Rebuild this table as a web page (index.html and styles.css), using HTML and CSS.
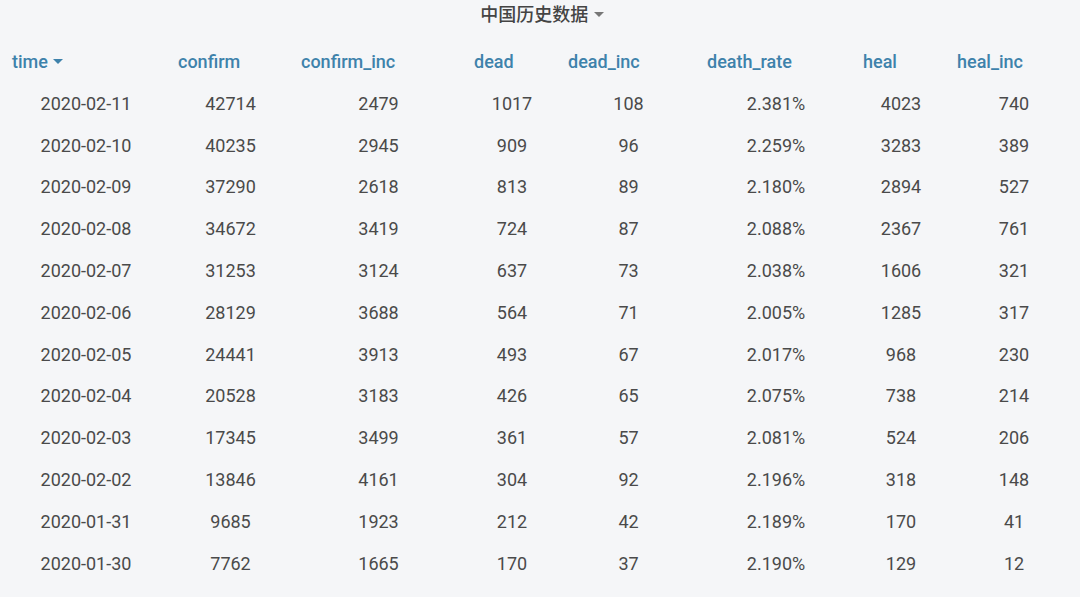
FILE: index.html
```html
<!DOCTYPE html>
<html lang="zh">
<head>
<meta charset="utf-8">
<title>中国历史数据</title>
<link rel="stylesheet" href="styles.css">
</head>
<body>
<div class="page">
  <div class="title">中国历史数据 <span class="caret caret-title"></span></div>
  <div class="table">
    <div class="th">time <span class="caret caret-head"></span></div>
    <div class="th">confirm</div>
    <div class="th">confirm_inc</div>
    <div class="th">dead</div>
    <div class="th">dead_inc</div>
    <div class="th">death_rate</div>
    <div class="th">heal</div>
    <div class="th">heal_inc</div>

    <div class="td">2020-02-11</div><div class="td">42714</div><div class="td">2479</div><div class="td">1017</div><div class="td">108</div><div class="td">2.381%</div><div class="td">4023</div><div class="td">740</div>
    <div class="td">2020-02-10</div><div class="td">40235</div><div class="td">2945</div><div class="td">909</div><div class="td">96</div><div class="td">2.259%</div><div class="td">3283</div><div class="td">389</div>
    <div class="td">2020-02-09</div><div class="td">37290</div><div class="td">2618</div><div class="td">813</div><div class="td">89</div><div class="td">2.180%</div><div class="td">2894</div><div class="td">527</div>
    <div class="td">2020-02-08</div><div class="td">34672</div><div class="td">3419</div><div class="td">724</div><div class="td">87</div><div class="td">2.088%</div><div class="td">2367</div><div class="td">761</div>
    <div class="td">2020-02-07</div><div class="td">31253</div><div class="td">3124</div><div class="td">637</div><div class="td">73</div><div class="td">2.038%</div><div class="td">1606</div><div class="td">321</div>
    <div class="td">2020-02-06</div><div class="td">28129</div><div class="td">3688</div><div class="td">564</div><div class="td">71</div><div class="td">2.005%</div><div class="td">1285</div><div class="td">317</div>
    <div class="td">2020-02-05</div><div class="td">24441</div><div class="td">3913</div><div class="td">493</div><div class="td">67</div><div class="td">2.017%</div><div class="td">968</div><div class="td">230</div>
    <div class="td">2020-02-04</div><div class="td">20528</div><div class="td">3183</div><div class="td">426</div><div class="td">65</div><div class="td">2.075%</div><div class="td">738</div><div class="td">214</div>
    <div class="td">2020-02-03</div><div class="td">17345</div><div class="td">3499</div><div class="td">361</div><div class="td">57</div><div class="td">2.081%</div><div class="td">524</div><div class="td">206</div>
    <div class="td">2020-02-02</div><div class="td">13846</div><div class="td">4161</div><div class="td">304</div><div class="td">92</div><div class="td">2.196%</div><div class="td">318</div><div class="td">148</div>
    <div class="td">2020-01-31</div><div class="td">9685</div><div class="td">1923</div><div class="td">212</div><div class="td">42</div><div class="td">2.189%</div><div class="td">170</div><div class="td">41</div>
    <div class="td">2020-01-30</div><div class="td">7762</div><div class="td">1665</div><div class="td">170</div><div class="td">37</div><div class="td">2.190%</div><div class="td">129</div><div class="td">12</div>
  </div>
</div>
</body>
</html>
```

FILE: styles.css
```css
html, body {
  margin: 0;
  padding: 0;
  background: #f5f6f8;
}
body {
  font-family: Roboto, "Noto Sans CJK SC", sans-serif;
  color: #4a4a4a;
  width: 1080px;
  height: 597px;
  overflow: hidden;
}
.page {
  padding-top: 4px;
}
.title {
  text-align: center;
  font-size: 18px;
  font-weight: 500;
  color: #444;
  line-height: 22px;
  padding-left: 4px;
}
.caret {
  display: inline-block;
  width: 0;
  height: 0;
  border-left: 5px solid transparent;
  border-right: 5px solid transparent;
  border-top: 5px solid currentColor;
  vertical-align: middle;
  position: relative;
  top: -2px;
}
.caret-title {
  color: #777;
  margin-left: 1px;
}
.caret-head {
  margin-left: 1px;
}
.table {
  display: grid;
  grid-template-columns: 166px 123px 173px 94px 139px 156px 94px 132px;
  grid-auto-rows: 41.8px;
  margin-top: 15px;
  padding-left: 3px;
  font-size: 18px;
}
.th {
  color: #3e82ab;
  font-weight: 500;
  line-height: 41.8px;
  padding: 0 9px;
  white-space: nowrap;
}
.td {
  text-align: center;
  line-height: 41.8px;
}
```
